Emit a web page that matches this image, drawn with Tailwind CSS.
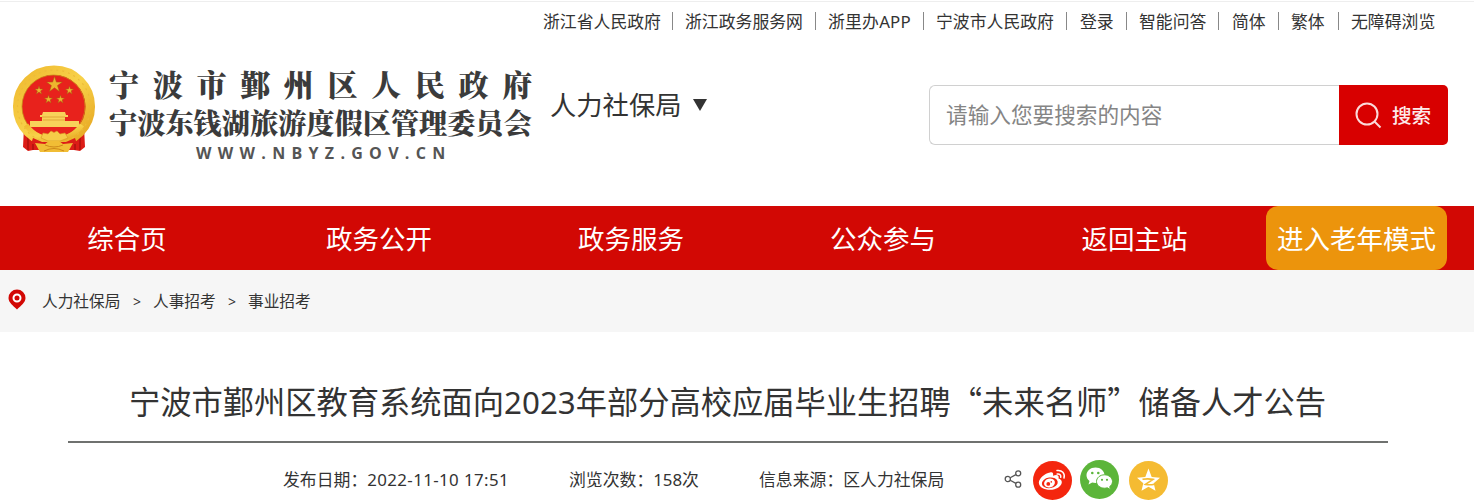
<!DOCTYPE html>
<html lang="zh-CN">
<head>
    <meta charset="UTF-8">
    <meta name="viewport" content="width=device-width, initial-scale=1.0">
    <title>宁波市鄞州区人民政府</title>
    <script src="https://cdn.jsdelivr.net/npm/@tailwindcss/browser@4"></script>
</head>
<body class="bg-white text-[#333] font-['Noto_Sans','Noto_Sans_CJK_SC',sans-serif] overflow-hidden whitespace-nowrap">
    <!-- top links -->
    <div class="mt-px h-[43px] border-t border-[#eee] flex justify-end pr-[37px] pt-[10px] text-[16.850px] leading-[20px]">
        <a class="w-[118px]">浙江省人民政府</a>
        <i class="w-px h-[18px] bg-[#888] ml-[11px] mr-[12px]"></i>
        <a class="w-[118px]">浙江政务服务网</a>
        <i class="w-px h-[18px] bg-[#888] ml-[12px] mr-[12px]"></i>
        <a class="w-[83px] tracking-[.2px]">浙里办APP</a>
        <i class="w-px h-[18px] bg-[#888] ml-[12px] mr-[12px]"></i>
        <a class="w-[118px]">宁波市人民政府</a>
        <i class="w-px h-[18px] bg-[#888] ml-[12px] mr-[13px]"></i>
        <a class="w-[35px]">登录</a>
        <i class="w-px h-[18px] bg-[#888] ml-[11px] mr-[12px]"></i>
        <a class="w-[67px]">智能问答</a>
        <i class="w-px h-[18px] bg-[#888] ml-[12px] mr-[13px]"></i>
        <a class="w-[35px]">简体</a>
        <i class="w-px h-[18px] bg-[#888] ml-[11px] mr-[12px]"></i>
        <a class="w-[35px]">繁体</a>
        <i class="w-px h-[18px] bg-[#888] ml-[12px] mr-[12px]"></i>
        <a class="w-[86px]">无障碍浏览</a>
    </div>

    <!-- header -->
    <header class="h-[162px] flex items-start pl-[12px]">
        <svg class="w-[84px] h-[90px] mt-[21px] shrink-0" viewBox="0 0 84 90">
            <defs>
                <linearGradient id="gold" x1="0" y1="0" x2="1" y2="1">
                    <stop offset="0" stop-color="#efb92f"/>
                    <stop offset=".5" stop-color="#f8d24a"/>
                    <stop offset="1" stop-color="#e5a31e"/>
                </linearGradient>
            </defs>
            <path d="M12 62l12 10h36l12-10 1 20-5 4-6-1H21l-5 1-5-4z" fill="#dc1d17"/>
            <path d="M16 72v13M21 76v9M63 76v9M68 72v13" stroke="#a30f0d" stroke-width="1.200"/>
            <circle cx="42" cy="41.500" r="36.300" fill="#e8221c" stroke="url(#gold)" stroke-width="9.500"/>
            <circle cx="42" cy="41.500" r="36.500" fill="none" stroke="#edbb38" stroke-width="1.200" stroke-dasharray="2 4"/>
            <circle cx="41.500" cy="41.500" r="31.500" fill="#e8221c" stroke="#c88a18" stroke-width=".8"/>
            <g fill="#eeb52e" stroke="#a85b12" stroke-width=".5">
                <path d="M42.500 11.500l1.900 5.600h5.900l-4.800 3.500 1.900 5.800-4.900-3.600-5 3.600 1.900-5.800-4.800-3.500h6z"/>
                <path id="s" d="M27 21l1 3h3.100l-2.500 1.900 1 3-2.600-1.900-2.600 1.900 1-3-2.500-1.900h3.100z"/>
                <use href="#s" x="30.500"/>
                <use href="#s" x="9.500" y="9"/>
                <use href="#s" x="21.500" y="9"/>
            </g>
            <path d="M31 47h22l1 3h2v2h-3v4h14v6H18v-6h12v-4h-2v-2h2z" fill="#f8d25a"/>
            <path d="M30 52h23M31 55h22" stroke="#d9962a" stroke-width=".7"/>
            <path d="M14 60c8 11 17 14 28 14s20-3 28-14" fill="none" stroke="url(#gold)" stroke-width="5"/>
            <path d="M36 69l3-3 3 1.500L45 66l3 3 5-1 3 5-8 3H36l-7-3 2-5z" fill="#f6cc48" stroke="#d69522" stroke-width=".6"/>
            <path d="M21 73l9 4h24l9-4 2 6H19z" fill="#dc1d17"/>
            <path d="M23 78l10 1 4-3h10l4 3 10-1-5 9H28z" fill="#f1bd35"/>
            <path d="M33 80q9 4 18 0M32 86q10-5 20 0" fill="none" stroke="#c98216" stroke-width=".9"/>
        </svg>
        <div class="w-[424px] ml-[13px] mt-[20px] text-[#3b3b3b] font-black font-['Noto_Serif_CJK_SC','Noto_Sans_CJK_SC',serif]">
            <div class="text-[30px] leading-[38px] tracking-[13.700px]">宁波市鄞州区人民政府</div>
            <div class="text-[28.200px] leading-[41px]">宁波东钱湖旅游度假区管理委员会</div>
            <div class="pl-[87px] text-[16px] leading-[21px] tracking-[6.300px] font-bold text-[#555] font-['Open_Sans']">WWW.NBYZ.GOV.CN</div>
        </div>
        <div class="flex items-center ml-[17px] mt-[42px] h-[40px] w-[379px] text-[26.300px]">
            <span>人力社保局</span>
            <svg class="w-[14px] h-[12px] ml-[12px] -mt-[3px]" viewBox="0 0 14 12"><path d="M0 0h14L7 12z" fill="#333"/></svg>
        </div>
        <div class="flex mt-[41px] h-[60px]">
            <div class="w-[410px] h-[60px] rounded-l-[6px] border border-r-0 border-[#d0d0d0] pl-[16px] text-[21.650px] leading-[58px] text-[#858585]">请输入您要搜索的内容</div>
            <div class="w-[109px] h-[60px] rounded-r-[5px] bg-[#d80000] flex items-center pl-[16px] text-white text-[19.600px]">
                <svg class="w-[27px] h-[27px] mr-[10px]" viewBox="0 0 27 27" fill="none" stroke="#fbdada" stroke-width="2"><circle cx="12" cy="12" r="10.500"/><path d="M19.500 19.500l6 6"/></svg>
                <span class="text-[#fdeaea] font-medium mt-[2px]">搜索</span>
            </div>
        </div>
    </header>

    <!-- main nav -->
    <nav class="h-[64px] bg-[#d20804] flex text-white text-[26.500px] leading-[66px] text-center pl-px">
        <a class="w-[252px]">综合页</a>
        <a class="w-[252px]">政务公开</a>
        <a class="w-[252px]">政务服务</a>
        <a class="w-[252px]">公众参与</a>
        <a class="w-[251px]">返回主站</a>
        <a class="w-[181px] ml-[6px] rounded-[12px] bg-[#ec940c]">进入老年模式</a>
    </nav>

    <!-- breadcrumb -->
    <div class="h-[62px] bg-[#f6f6f6] flex items-center pl-[8px] pt-px text-[15.700px]">
        <svg class="w-[18px] h-[21px] mr-[16px] -mt-[5px]" viewBox="0 0 18 21">
            <path d="M9 .5a8.500 8.500 0 0 1 8.500 8.500c0 4.500-4.500 7.500-8.500 11.500C5 16.500.5 13.500.5 9A8.500 8.500 0 0 1 9 .5z" fill="#d20804"/>
            <circle cx="9" cy="9" r="3.500" fill="none" stroke="#fff" stroke-width="2"/>
        </svg>
        <a class="w-[79px]">人力社保局</a>
        <span class="w-[32px] text-center text-[14px]">&gt;</span>
        <a class="w-[63px]">人事招考</a>
        <span class="w-[32px] text-center text-[14px]">&gt;</span>
        <a>事业招考</a>
    </div>

    <!-- article -->
    <main class="px-[68px]">
        <h1 class="w-[1320px] h-[111px] pt-[46px] pr-px border-b-2 border-[#6f716f] text-center text-[31.270px] leading-[46px]">宁波市鄞州区教育系统面向2023年部分高校应届毕业生招聘<span class="font-['Noto_Sans_CJK_SC']">“未来名师”</span>储备人才公告</h1>
        <div class="flex items-center pl-[215px] pt-[17px] h-[58px] text-[16.850px]">
            <span class="w-[286px] -mt-[2px]">发布日期：<span class="tracking-[.4px]">2022-11-10 17:51</span></span>
            <span class="w-[190px] -mt-[2px]">浏览次数：158次</span>
            <span class="w-[245px] -mt-[2px]">信息来源：区人力社保局</span>
            <svg class="w-[18px] h-[18px] mr-[11px] -mt-[3px]" viewBox="0 0 18 18" fill="none" stroke="#555" stroke-width="1.300">
                <circle cx="3.800" cy="9" r="2.600"/><circle cx="14.200" cy="3.300" r="2.500"/><circle cx="14.200" cy="14.700" r="2.500"/>
                <path d="M6.200 7.800l5.700-3.200M6.200 10.200l5.700 3.200"/>
            </svg>
            <svg class="w-[39px] h-[39px] mr-[8px]" viewBox="0 0 39 39">
                <circle cx="19.500" cy="19.500" r="19.500" fill="#f4260e"/>
                <path d="M17 11.500c2.500-.8 3.700.5 3 3.200 4-1.500 6.500-.5 5.500 2.800 2 .5 3.500 1.900 3.300 4-.4 4-5.600 7.300-11.700 7.300-6 0-11-2.500-11.300-7 .2-4.500 6-9.500 11.200-10.300z" fill="#fff"/>
                <ellipse cx="16.800" cy="21.800" rx="8" ry="5.300" transform="rotate(-8 16.800 21.800)" fill="#f4260e"/>
                <ellipse cx="16.500" cy="22" rx="5.500" ry="4.400" transform="rotate(-15 16.500 22)" fill="#fff"/>
                <circle cx="15.300" cy="22.900" r="1.900" fill="#f4260e"/><circle cx="18.300" cy="20.900" r=".8" fill="#f4260e"/>
                <path d="M24 9.500c5-.8 8.300 3 7 7.500M24.200 13c2.600-.5 4 1.200 3.500 3.300" fill="none" stroke="#fff" stroke-width="1.500" stroke-linecap="round"/>
            </svg>
            <svg class="w-[39px] h-[39px] -mt-[2px] mr-[10px]" viewBox="0 0 39 39">
                <circle cx="19.500" cy="19.500" r="19.500" fill="#5cb53a"/>
                <path d="M15.500 7.500c5.100 0 9 3.500 9 7.800s-3.900 7.700-9 7.700c-1.200 0-2.300-.2-3.300-.5L8.500 24.500l1-3.500c-2-1.400-3-3.500-3-5.700 0-4.300 4-7.800 9-7.800z" fill="#fff"/>
                <path d="M24.500 14.800c4.400 0 8 3 8 6.700 0 2.100-1.100 3.900-2.800 5.100l.8 3-3.200-1.800c-.9.300-1.800.4-2.800.4-4.500 0-8-3-8-6.700s3.500-6.700 8-6.700z" fill="#fff" stroke="#5cb53a" stroke-width="1"/>
                <g fill="#5cb53a"><circle cx="12.300" cy="13" r="1.300"/><circle cx="18.300" cy="13" r="1.300"/><circle cx="22" cy="19.800" r="1.100"/><circle cx="27" cy="19.800" r="1.100"/></g>
            </svg>
            <svg class="w-[39px] h-[39px]" viewBox="0 0 39 39">
                <circle cx="19.500" cy="19.500" r="19.500" fill="#f5bb32"/>
                <path d="M19.500 7.500l3.200 8.500 8.300.7-6.300 5.500 1.800 7.600-7-4-7 4 1.800-7.600-6.300-5.500 8.300-.7z" fill="#fff"/>
                <path d="M13.500 18.300c4-.6 7.500-.5 10.500.1l-7.500 5c3 .5 6 .4 9-.2" fill="none" stroke="#f5bb32" stroke-width="1.600"/>
            </svg>
        </div>
    </main>
</body>
</html>
